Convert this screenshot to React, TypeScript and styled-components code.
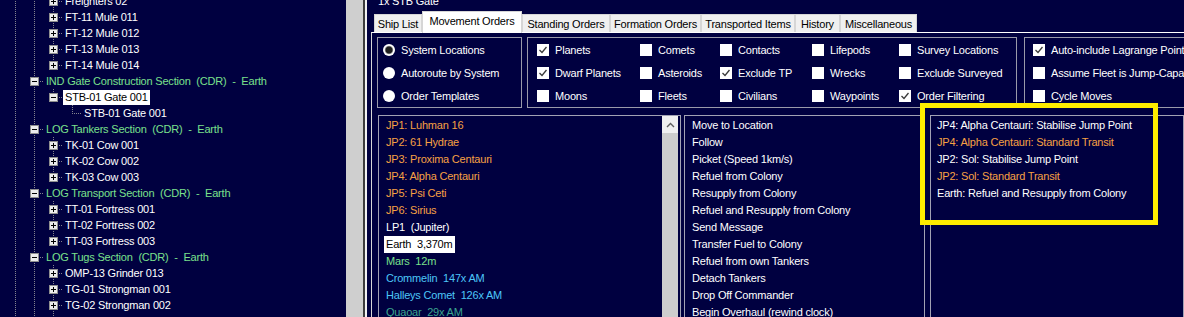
import styled, { createGlobalStyle } from "styled-components";

const NAVY = "#000040";
const ORANGE = "#f7a043";
const GREEN = "#7ae08c";
const CYAN = "#4cc6f8";
const TEAL = "#3aa58e";
const LINE = "#84848e";

const GlobalStyle = createGlobalStyle`
  html, body { margin: 0; padding: 0; background: ${NAVY}; overflow: hidden; }
  body {
    font-family: "Liberation Sans", Arial, sans-serif;
    font-size: 11px;
    letter-spacing: -0.2px;
    color: #fff;
  }
`;

const Page = styled.div`
  position: relative;
  display: flex;
  width: 1184px;
  height: 317px;
  overflow: hidden;
  background: ${NAVY};
`;

/* ---------- fleet tree ---------- */

const TreePane = styled.div`
  width: 346px;
  flex: none;
  overflow: hidden;
`;

const TreeList = styled.div`
  margin-top: -7px;
  padding-left: 6px;
`;

const TreeRow = styled.div`
  display: flex;
  height: 16px;
`;

const vDots = `repeating-linear-gradient(to bottom, ${LINE} 0 1px, transparent 1px 2px)`;
const hDots = `repeating-linear-gradient(to right, ${LINE} 0 1px, transparent 1px 2px)`;

type GuideProps = { $up?: boolean; $down?: boolean; $right?: boolean };

function guideBg({ $up, $down, $right }: GuideProps) {
  const layers: string[] = [];
  const sizes: string[] = [];
  const pos: string[] = [];
  if ($up || $down) {
    layers.push(vDots);
    sizes.push($up && $down ? "1px 16px" : "1px 8px");
    pos.push($up ? "9px 0" : "9px 8px");
  }
  if ($right) {
    layers.push(hDots);
    sizes.push("10px 1px");
    pos.push("9px 8px");
  }
  if (!layers.length) return "";
  return `
    background-image: ${layers.join(", ")};
    background-size: ${sizes.join(", ")};
    background-position: ${pos.join(", ")};
    background-repeat: no-repeat;
  `;
}

const Guide = styled.span<GuideProps>`
  width: 19px;
  flex: none;
  display: flex;
  justify-content: center;
  align-items: flex-start;
  ${(p) => guideBg(p)}
`;

const Expander = styled.span`
  width: 9px;
  height: 9px;
  margin-top: 4px;
  box-sizing: border-box;
  border: 1px solid #8e8e8e;
  background: #ececec;
  display: flex;
`;

const TreeLabel = styled.span<{ $tone: "ship" | "section"; $selected?: boolean }>`
  align-self: center;
  height: 15px;
  line-height: 15px;
  padding: 0 2px;
  white-space: pre;
  color: ${(p) => (p.$selected ? "#000" : p.$tone === "section" ? GREEN : "#fff")};
  background: ${(p) => (p.$selected ? "#fff" : "transparent")};
`;

const PaneScroll = styled.div`
  width: 17px;
  flex: none;
  background: #cfcfcf;
`;

type TreeItem = {
  label: string;
  level: 1 | 2 | 3;
  exp?: "+" | "-";
  last?: boolean;
  selected?: boolean;
};

const tree: TreeItem[] = [
  { label: "Freighters 02", level: 2, exp: "+" },
  { label: "FT-11 Mule 011", level: 2, exp: "+" },
  { label: "FT-12 Mule 012", level: 2, exp: "+" },
  { label: "FT-13 Mule 013", level: 2, exp: "+" },
  { label: "FT-14 Mule 014", level: 2, exp: "+", last: true },
  { label: "IND Gate Construction Section  (CDR)  -  Earth", level: 1, exp: "-" },
  { label: "STB-01 Gate 001", level: 2, exp: "-", last: true, selected: true },
  { label: "STB-01 Gate 001", level: 3 },
  { label: "LOG Tankers Section  (CDR)  -  Earth", level: 1, exp: "-" },
  { label: "TK-01 Cow 001", level: 2, exp: "+" },
  { label: "TK-02 Cow 002", level: 2, exp: "+" },
  { label: "TK-03 Cow 003", level: 2, exp: "+", last: true },
  { label: "LOG Transport Section  (CDR)  -  Earth", level: 1, exp: "-" },
  { label: "TT-01 Fortress 001", level: 2, exp: "+" },
  { label: "TT-02 Fortress 002", level: 2, exp: "+" },
  { label: "TT-03 Fortress 003", level: 2, exp: "+", last: true },
  { label: "LOG Tugs Section  (CDR)  -  Earth", level: 1, exp: "-" },
  { label: "OMP-13 Grinder 013", level: 2, exp: "+" },
  { label: "TG-01 Strongman 001", level: 2, exp: "+" },
  { label: "TG-02 Strongman 002", level: 2, exp: "+" },
  { label: "TG-03 Strongman 003", level: 2, exp: "+" },
];

function ExpandBox({ sign }: { sign: "+" | "-" }) {
  return (
    <Expander>
      <svg width="7" height="7" viewBox="0 0 7 7">
        <rect x="1" y="3" width="5" height="1" fill="#000" />
        {sign === "+" && <rect x="3" y="1" width="1" height="5" fill="#000" />}
      </svg>
    </Expander>
  );
}

function TreeLine({ item }: { item: TreeItem }) {
  const node = (
    <Guide $up $down={!item.last} $right>
      {item.exp && <ExpandBox sign={item.exp} />}
    </Guide>
  );
  return (
    <TreeRow>
      <Guide $up $down />
      {item.level === 1 && node}
      {item.level === 2 && (
        <>
          <Guide $up $down />
          {node}
        </>
      )}
      {item.level === 3 && (
        <>
          <Guide $up $down />
          <Guide />
          <Guide $up $right />
        </>
      )}
      <TreeLabel $tone={item.level === 1 ? "section" : "ship"} $selected={item.selected}>
        {item.label}
      </TreeLabel>
    </TreeRow>
  );
}

/* ---------- orders pane ---------- */

const RightPane = styled.div`
  flex: 1;
  min-width: 0;
  display: flex;
  flex-direction: column;
  border-left: 2px solid #3e3e3e;
  box-shadow: inset 2px 0 0 #f2f2f2;
`;

const Title = styled.div`
  height: 11px;
  overflow: hidden;
  padding-left: 13px;
  flex: none;

  span {
    display: block;
    margin-top: -6px;
    line-height: 14px;
    white-space: nowrap;
  }
`;

const TabStrip = styled.div`
  display: flex;
  align-items: flex-end;
  height: 21px;
  margin-left: 6px;
  padding-left: 3px;
  flex: none;
`;

const Tab = styled.div<{ $w: number; $active?: boolean }>`
  box-sizing: border-box;
  width: ${(p) => p.$w}px;
  height: ${(p) => (p.$active ? 22 : 18)}px;
  margin-bottom: ${(p) => (p.$active ? -1 : 0)}px;
  padding-bottom: ${(p) => (p.$active ? 3 : 0)}px;
  display: flex;
  align-items: center;
  justify-content: center;
  background: ${(p) => (p.$active ? "#ffffff" : "#f0f0f0")};
  border: 1px solid #d6d6d6;
  border-bottom: none;
  color: #000;
  white-space: nowrap;
  position: relative;
  z-index: ${(p) => (p.$active ? 1 : 0)};
`;

const TabPage = styled.div`
  flex: 1;
  margin-left: 6px;
  border-top: 1px solid #ffffff;
  border-left: 1px solid #d8d8d8;
  padding: 4px 0 0 5px;
  overflow: hidden;
`;

const GroupRow = styled.div`
  display: flex;
  height: 71px;
`;

const GroupBox = styled.div<{ $w: number; $ml?: number; $pl: number }>`
  box-sizing: border-box;
  flex: none;
  width: ${(p) => p.$w}px;
  margin-left: ${(p) => p.$ml ?? 0}px;
  padding-left: ${(p) => p.$pl}px;
  border: 1px solid #9a9aaa;
`;

const CheckGrid = styled.div<{ $cols: string }>`
  display: grid;
  grid-template-columns: ${(p) => p.$cols};
  grid-auto-rows: 23px;
`;

const Option = styled.div`
  display: flex;
  align-items: center;
  gap: 6px;
  height: 23px;
  white-space: nowrap;
`;

const RadioDot = styled.span<{ $on?: boolean }>`
  width: 12px;
  height: 12px;
  flex: none;
  border-radius: 50%;
  background: ${(p) =>
    p.$on ? "radial-gradient(circle, #1e1e1e 0 3px, #6a6a6a 3.6px, #ffffff 4.6px)" : "#ffffff"};
`;

const Box = styled.span`
  width: 12px;
  height: 12px;
  flex: none;
  background: #ffffff;
  display: flex;
`;

function Check({ on, label }: { on?: boolean; label: string }) {
  return (
    <Option>
      <Box>
        {on && (
          <svg width="12" height="12" viewBox="0 0 12 12">
            <polyline points="2.5,6 5,8.5 9.5,3" fill="none" stroke="#3a3a3a" strokeWidth="1.3" />
          </svg>
        )}
      </Box>
      {label}
    </Option>
  );
}

const ListRow = styled.div`
  display: flex;
  margin-top: 7px;
`;

const ListBox = styled.div<{ $w?: number; $ml: number }>`
  box-sizing: border-box;
  flex: ${(p) => (p.$w ? "none" : "1")};
  width: ${(p) => (p.$w ? `${p.$w}px` : "auto")};
  margin-left: ${(p) => p.$ml}px;
  height: 215px;
  border: 1px solid #a2a2b4;
  display: flex;
`;

const Items = styled.div<{ $pl: number }>`
  flex: 1;
  display: flex;
  flex-direction: column;
  align-items: flex-start;
  padding: 1px 0 0 ${(p) => p.$pl}px;
  min-width: 0;
`;

const Item = styled.div<{ $color?: string; $selected?: boolean }>`
  height: 17px;
  line-height: 17px;
  padding: 0 2px;
  white-space: pre;
  color: ${(p) => (p.$selected ? "#000" : p.$color ?? "#fff")};
  background: ${(p) => (p.$selected ? "#fff" : "transparent")};
`;

const ScrollBar = styled.div`
  width: 16px;
  margin-right: 2px;
  flex: none;
  display: flex;
  flex-direction: column;
  background: #cdcdcd;
`;

const ScrollButton = styled.div`
  height: 17px;
  background: #f0f0f0;
  display: flex;
  align-items: center;
  justify-content: center;
`;

const Callout = styled.div`
  position: absolute;
  left: 920px;
  top: 103px;
  width: 238px;
  height: 122px;
  box-sizing: border-box;
  border: 5px solid #ffec00;
  pointer-events: none;
`;

const tabs = [
  { label: "Ship List", w: 48 },
  { label: "Movement Orders", w: 100, active: true },
  { label: "Standing Orders", w: 88 },
  { label: "Formation Orders", w: 91 },
  { label: "Transported Items", w: 94 },
  { label: "History", w: 45 },
  { label: "Miscellaneous", w: 77 },
];

const filters: { label: string; on?: boolean }[] = [
  { label: "Planets", on: true },
  { label: "Comets" },
  { label: "Contacts" },
  { label: "Lifepods" },
  { label: "Survey Locations" },
  { label: "Dwarf Planets", on: true },
  { label: "Asteroids" },
  { label: "Exclude TP", on: true },
  { label: "Wrecks" },
  { label: "Exclude Surveyed" },
  { label: "Moons" },
  { label: "Fleets" },
  { label: "Civilians" },
  { label: "Waypoints" },
  { label: "Order Filtering", on: true },
];

const locations: { label: string; color: string; selected?: boolean }[] = [
  { label: "JP1: Luhman 16", color: ORANGE },
  { label: "JP2: 61 Hydrae", color: ORANGE },
  { label: "JP3: Proxima Centauri", color: ORANGE },
  { label: "JP4: Alpha Centauri", color: ORANGE },
  { label: "JP5: Psi Ceti", color: ORANGE },
  { label: "JP6: Sirius", color: ORANGE },
  { label: "LP1  (Jupiter)", color: "#fff" },
  { label: "Earth  3,370m", color: "#fff", selected: true },
  { label: "Mars  12m", color: GREEN },
  { label: "Crommelin  147x AM", color: CYAN },
  { label: "Halleys Comet  126x AM", color: CYAN },
  { label: "Quaoar  29x AM", color: TEAL },
];

const actions = [
  "Move to Location",
  "Follow",
  "Picket (Speed 1km/s)",
  "Refuel from Colony",
  "Resupply from Colony",
  "Refuel and Resupply from Colony",
  "Send Message",
  "Transfer Fuel to Colony",
  "Refuel from own Tankers",
  "Detach Tankers",
  "Drop Off Commander",
  "Begin Overhaul (rewind clock)",
];

const queued: { label: string; color: string }[] = [
  { label: "JP4: Alpha Centauri: Stabilise Jump Point", color: "#fff" },
  { label: "JP4: Alpha Centauri: Standard Transit", color: ORANGE },
  { label: "JP2: Sol: Stabilise Jump Point", color: "#fff" },
  { label: "JP2: Sol: Standard Transit", color: ORANGE },
  { label: "Earth: Refuel and Resupply from Colony", color: "#fff" },
];

export default function App() {
  return (
    <>
      <GlobalStyle />
      <Page>
        <TreePane>
          <TreeList>
            {tree.map((item, i) => (
              <TreeLine key={i} item={item} />
            ))}
          </TreeList>
        </TreePane>
        <PaneScroll />

        <RightPane>
          <Title>
            <span>1x STB Gate</span>
          </Title>
          <TabStrip>
            {tabs.map((t) => (
              <Tab key={t.label} $w={t.w} $active={t.active}>
                {t.label}
              </Tab>
            ))}
          </TabStrip>
          <TabPage>
            <GroupRow>
              <GroupBox $w={145} $pl={5}>
                <Option>
                  <RadioDot $on />
                  System Locations
                </Option>
                <Option>
                  <RadioDot />
                  Autoroute by System
                </Option>
                <Option>
                  <RadioDot />
                  Order Templates
                </Option>
              </GroupBox>
              <GroupBox $w={490} $ml={5} $pl={9}>
                <CheckGrid $cols="103px 80px 92px 87px 1fr">
                  {filters.map((f) => (
                    <Check key={f.label} on={f.on} label={f.label} />
                  ))}
                </CheckGrid>
              </GroupBox>
              <GroupBox $w={240} $ml={7} $pl={8}>
                <Check on label="Auto-include Lagrange Points" />
                <Check label="Assume Fleet is Jump-Capable" />
                <Check label="Cycle Moves" />
              </GroupBox>
            </GroupRow>

            <ListRow>
              <ListBox $w={303} $ml={1}>
                <Items $pl={5}>
                  {locations.map((l) => (
                    <Item key={l.label} $color={l.color} $selected={l.selected}>
                      {l.label}
                    </Item>
                  ))}
                </Items>
                <ScrollBar>
                  <ScrollButton>
                    <svg width="9" height="6" viewBox="0 0 9 6">
                      <polyline points="1,5 4.5,1.5 8,5" fill="none" stroke="#606060" strokeWidth="1.4" />
                    </svg>
                  </ScrollButton>
                </ScrollBar>
              </ListBox>
              <ListBox $w={241} $ml={3}>
                <Items $pl={5}>
                  {actions.map((a) => (
                    <Item key={a}>{a}</Item>
                  ))}
                </Items>
              </ListBox>
              <ListBox $ml={5}>
                <Items $pl={4}>
                  {queued.map((q, i) => (
                    <Item key={i} $color={q.color}>
                      {q.label}
                    </Item>
                  ))}
                </Items>
              </ListBox>
            </ListRow>
          </TabPage>
        </RightPane>

        <Callout />
      </Page>
    </>
  );
}
